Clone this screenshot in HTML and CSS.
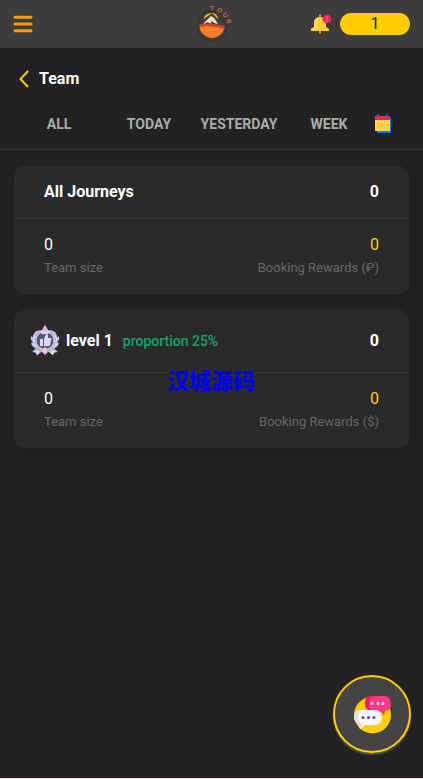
FILE: index.html
```html
<!DOCTYPE html>
<html lang="en">
<head>
<meta charset="utf-8">
<meta name="viewport" content="width=device-width, initial-scale=1">
<title>Team</title>
<link rel="stylesheet" href="styles.css">
</head>
<body>
<div class="page">
  <header class="topbar">
    <button class="icon-button menu" aria-label="Menu">
      <svg width="20" height="20" viewBox="0 0 20 20" fill="none" stroke="#fb9b04" stroke-width="3" stroke-linecap="round"><path d="M2 3.300h16M2 10h16M2 16.700h16"/></svg>
    </button>
    <a class="logo" href="#" aria-label="Home">
      <svg width="48" height="44" viewBox="0 0 48 44">
        <defs>
          <clipPath id="disc"><circle cx="24" cy="23.500" r="12.500"/></clipPath>
        </defs>
        <circle cx="24" cy="24" r="15" fill="none" stroke="#363636" stroke-width="2"/>
        <g clip-path="url(#disc)">
          <path d="M10 10h28v29H10z" fill="#303a38"/>
          <circle cx="23" cy="18" r="7.500" fill="#f9a91a"/>
          <path d="M10 23l7-7 3-2 4-3 5 5 9 7v5H10z" fill="#42433c"/>
          <path d="M16 21l7-7 3 2 4 6-4-1-2-2-2 3-2-2-4 2z" fill="#e9dfd3"/>
          <path d="M10 25q7-3 13-1 8 2 15 0v14H10z" fill="#f37a2b"/>
          <path d="M10 23q8-2 15-1l13 2v3q-13-3-19-3l-9 1z" fill="#d83d20"/>
          <path d="M11 29q12-3 26 1" stroke="#f9912e" fill="none"/>
        </g>
        <g class="logo-text logo-first">
          <text x="24" y="9" transform="rotate(-76 24 23.500)">M</text>
          <text x="24" y="9" transform="rotate(-52 24 23.500)">A</text>
          <text x="24" y="9" transform="rotate(-29 24 23.500)">X</text>
        </g>
        <g class="logo-text">
          <text x="24" y="9" transform="rotate(0 24 23.500)">T</text>
          <text x="24" y="9" transform="rotate(26 24 23.500)">O</text>
          <text x="24" y="9" transform="rotate(52 24 23.500)">U</text>
          <text x="24" y="9" transform="rotate(76 24 23.500)">R</text>
        </g>
      </svg>
    </a>
    <div class="actions">
      <button class="icon-button" aria-label="Notifications">
        <svg width="22" height="20" viewBox="0 0 22 20">
          <path d="M10 1v4M10 16v3" stroke="#f48b17" stroke-width="2" stroke-linecap="round"/>
          <path d="M4 9a6 6 0 0 1 12 0v4l3 2v2H1v-2l3-2z" fill="#ffcc35"/>
          <path d="M4 9a6 6 0 0 1 5-6q-2 5-2 12l-6 2v-2l3-2z" fill="#ffd65c"/>
          <circle cx="17" cy="5" r="4.300" fill="#ff2058"/>
          <path d="M17 2.500v3M17 6.800v1" stroke="#ffb2c4"/>
        </svg>
      </button>
      <button class="counter">1</button>
    </div>
  </header>

  <div class="heading">
    <a class="back" href="#" aria-label="Back"><svg width="10" height="18" viewBox="0 0 10 18" fill="none" stroke="#fc0" stroke-width="2"><path d="M9 1L1.500 9 9 17"/></svg></a>
    <h1>Team</h1>
  </div>

  <nav class="filters">
    <button>ALL</button>
    <button>TODAY</button>
    <button>YESTERDAY</button>
    <button>WEEK</button>
    <button class="calendar" aria-label="Choose dates">
      <svg width="18" height="20" viewBox="0 0 18 20">
        <path d="M3 4h14v15H3z" fill="#087cff"/>
        <path d="M1 3h15v14H1z" fill="#ffd43c"/>
        <path d="M1 2h15v4H1z" fill="#f5244f"/>
        <path d="M4 .500v3M13 .500v3" stroke="#1268c9" stroke-width="2"/>
        <path d="M4 9.500h8M4 12.500h8" stroke="#a9b271" stroke-width="1" stroke-dasharray="1 2"/>
      </svg>
    </button>
  </nav>

  <main class="cards">
    <section class="card">
      <div class="card-head total">
        <h2>All Journeys</h2>
        <strong>0</strong>
      </div>
      <div class="card-body">
        <div><p class="value">0</p><p class="label">Team size</p></div>
        <div class="reward"><p class="value">0</p><p class="label">Booking Rewards (₽)</p></div>
      </div>
    </section>
    <section class="card">
      <div class="card-head level">
        <svg class="medal" width="30" height="32" viewBox="0 0 30 32">
          <path d="M7 22l-5 5 4 .500 1 3 5-4 3 3 3-3 5 4 1-3 4-.500-5-5z" fill="#b3a7cf"/>
          <path d="M9 24l-6 3 3 .500L7 30l5-5M21 24l6 3-3 .500-1 2.500-5-5" fill="#e3daf1"/>
          <path d="M9 5Q3 7 3 12l-2-1q-1 4 2 6l-2 1q1 4 4 5 3 4 7 4l3-2 3 2q4 0 7-4 3-1 4-5l-2-1q3-2 2-6l-2 1q0-5-6-7l-3 2h-6z" fill="#b9b1d2"/>
          <path d="M7 6q-6 8-2 15M4 10l1 3M1 13l4 4M2 19l5 3M23 6q6 8 2 15M26 10l-1 3M29 13l-4 4M28 19l-5 3" stroke="#e4def0" fill="none"/>
          <circle cx="15" cy="15.500" r="9.500" fill="#d1cbe0"/>
          <circle cx="15" cy="15.500" r="8.500" fill="#535a7c"/>
          <path d="M10 14h3v7h-3zM14 14l2-5q2 0 2 2v2h3q1 1 0 3l-1 4q0 1-2 1h-4z" fill="#ddd7f5"/>
          <path d="M9 6l3-1 3-5 3 5 3 1-3 3h-6z" fill="#ddd3ec"/>
          <path d="M15 2l2 3-2 2-2-2z" fill="#f1a4d7"/>
          <path d="M15 22l4 4-4 4-4-4z" fill="#ed9ed5"/>
          <path d="M15 22l2 4-2 2-3-2z" fill="#f7c7e8"/>
        </svg>
        <h2>level 1</h2>
        <span class="proportion">proportion 25%</span>
        <strong>0</strong>
      </div>
      <div class="card-body">
        <div><p class="value">0</p><p class="label">Team size</p></div>
        <div class="reward"><p class="value">0</p><p class="label">Booking Rewards ($)</p></div>
      </div>
    </section>
  </main>

  <div class="watermark" lang="zh-CN">汉城源码</div>

  <button class="chat" aria-label="Chat">
    <svg width="40" height="40" viewBox="0 0 40 40">
      <circle cx="20.500" cy="21" r="18.500" fill="#ffcf00"/>
      <path d="M19 2h13q7 0 7 7.500T33 17l-1 4-5-4h-7q-7 0-7-7.500T19 2z" fill="#ff3980"/>
      <path d="M19 2h4q-6 1-6 8 0 6 5 7-9 0-9-7.500Q13 2 19 2z" fill="#e91b61"/>
      <path d="M10 16h13q7 0 7 7.500T23 31H13l-5 4-1-5q-5-2-5-7 0-7 8-7z" fill="#f7f7fd"/>
      <path d="M10 16q-4 2-4 8 0 4 4 7l-2 4-1-5q-5-2-5-7 0-6 8-7z" fill="#dcdceb"/>
      <path d="M20 9.500h.1M26 9.500h.1M31 9.500h.1" stroke="#fff" stroke-width="3" stroke-linecap="round"/>
      <path d="M11 23.500h.1M16.500 23.500h.1M22 23.500h.1" stroke="#7041ad" stroke-width="3" stroke-linecap="round"/>
    </svg>
  </button>
</div>
</body>
</html>
```
FILE: styles.css
```css
* {
  box-sizing: border-box;
}

body {
  margin: 0;
  background: #222;
  color: #fff;
  font-family: Roboto, "Liberation Sans", sans-serif;
  font-size: 16px;
  line-height: 24px;
}

button {
  padding: 0;
  border: 0;
  background: none;
  color: inherit;
  font: inherit;
  cursor: pointer;
}

svg {
  display: block;
}

h1, h2, p {
  margin: 0;
  font-size: 16px;
}

.page {
  min-height: 100vh;
  border-bottom: 1px solid #e4dfe2;
}

.topbar {
  display: grid;
  grid-template-columns: 1fr auto 1fr;
  align-items: center;
  height: 49px;
  padding: 0 13px;
  border-bottom: 1px solid #1e232d;
  background: #3c3c3c;
}

.menu {
  justify-self: start;
}

.logo-text {
  fill: #bd6039;
  font: bold 7px Roboto, sans-serif;
  text-anchor: middle;
}

.logo-first {
  fill: #304744;
}

.actions {
  display: flex;
  align-items: center;
  justify-content: flex-end;
  gap: 8px;
}

.counter {
  width: 70px;
  height: 22px;
  border-radius: 11px;
  background: #fc0;
  color: #222;
  line-height: 22px;
}

.heading {
  display: flex;
  align-items: center;
  gap: 10px;
  height: 60px;
  padding: 0 19px;
}

.filters {
  display: grid;
  grid-template-columns: repeat(4, 1fr) 18px;
  align-items: center;
  height: 41px;
  padding: 0 31px 10px 14px;
  border-bottom: 1px solid #363636;
  color: #aaa;
  font-size: 14px;
  font-weight: 700;
}

.cards {
  display: grid;
  gap: 16px;
  padding: 16px 14px;
}

.card {
  border-radius: 10px;
  background: #2a2a2a;
  box-shadow: 0 4px 12px rgba(0, 0, 0, 0.12);
}

.card-head {
  display: flex;
  align-items: center;
  padding: 0 30px;
  border-bottom: 1px solid #363636;
}

.card-head strong {
  margin-left: auto;
}

.total {
  height: 53px;
}

.level {
  height: 63px;
  padding-left: 16px;
}

.medal {
  margin-right: 6px;
}

.proportion {
  margin-left: 10px;
  color: #16a368;
  font-size: 14px;
  font-weight: 500;
}

.card-body {
  display: flex;
  justify-content: space-between;
  padding: 14px 30px 15px;
}

.reward {
  text-align: right;
}

.reward .value {
  color: #fc0;
}

.label {
  color: #666;
  font-size: 13px;
  line-height: 22px;
}

.watermark {
  position: fixed;
  top: 367px;
  left: 0;
  width: 100%;
  color: #00f;
  font-family: "Noto Sans CJK SC", sans-serif;
  font-size: 22px;
  font-weight: 900;
  text-align: center;
  pointer-events: none;
}

.chat {
  position: fixed;
  right: 12px;
  bottom: 26px;
  display: grid;
  place-items: center;
  width: 78px;
  height: 78px;
  border: 2px solid #fc0;
  border-radius: 50%;
  background: #444;
  box-shadow: 0 2px 2px #555;
}
```
